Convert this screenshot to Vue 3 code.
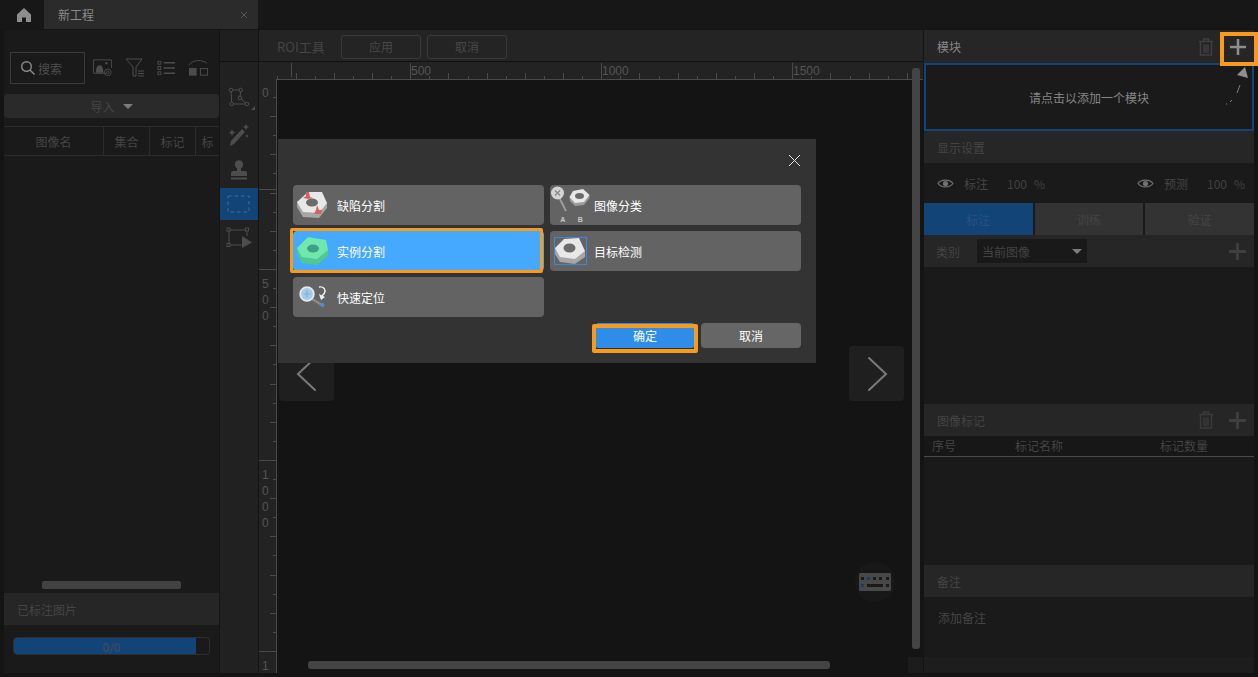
<template>
  <div class="app">
    <div class="tabbar">
      <div class="home">
        <svg width="16" height="16" viewBox="0 0 16 16"><path d="M8 1 L15 7.5 V15 H10 V10.5 H6 V15 H1 V7.5 Z" fill="#8e8e8e" /></svg>
      </div>
      <div class="tab">
        <span>新工程</span>
        <svg width="8" height="8" viewBox="0 0 8 8"><path d="M1 1 L7 7 M7 1 L1 7" stroke="#555" stroke-width="1" /></svg>
      </div>
    </div>

    <div class="main">
      <!-- 左侧图像列表 -->
      <aside class="left">
        <div class="search-row">
          <div class="search">
            <svg width="16" height="16" viewBox="0 0 16 16" fill="none" stroke="#8a8a8a" stroke-width="1.4"><circle cx="6.5" cy="6.5" r="4.8" /><path d="M10 10 L14.5 14.5" /></svg>
            <span>搜索</span>
          </div>
          <svg class="ic" width="21" height="20" viewBox="0 0 22 20" fill="none" stroke="#4c4c4c">
            <path d="M15 15.5 H1.5 V1.5 H20.5 V10" />
            <path d="M4 15 C4.5 10 5 7 8 7 C11 7 11.5 10 12 15 Z" fill="#4c4c4c" stroke="none" />
            <circle cx="15" cy="5" r="1.3" fill="#4c4c4c" stroke="none" />
            <circle cx="16.5" cy="14.5" r="3.5" /><circle cx="16.5" cy="14.5" r="1.3" />
          </svg>
          <svg class="ic" width="20" height="20" viewBox="0 0 20 20" fill="none" stroke="#4c4c4c">
            <path d="M1 1 H17 L11 9 V18 L8 18 V9 Z" /><path d="M13 13 H19 M13 15.5 H19 M13 18 H19" />
          </svg>
          <svg class="ic" width="19" height="16" viewBox="0 0 20 16" fill="none" stroke="#4c4c4c">
            <rect x="1" y="1" width="3" height="3" /><rect x="1" y="6.5" width="3" height="3" /><rect x="1" y="12" width="3" height="3" />
            <path d="M7 2.5 H19 M7 8 H19 M7 13.5 H19" stroke-width="1.6" />
          </svg>
          <svg class="ic" width="21" height="18" viewBox="0 0 22 18" fill="none" stroke="#4c4c4c">
            <path d="M1 6 C5 0 15 0 20 4" /><rect x="1" y="9" width="8" height="8" fill="#4c4c4c" stroke="none" /><rect x="13" y="9.5" width="7.5" height="7" />
          </svg>
        </div>
        <div class="import">导入<i class="caret"></i></div>
        <div class="thead">
          <div v-for="c in imageCols" :key="c.name + c.w" class="th" :style="{ width: c.w + 'px' }">{{ c.name }}</div>
        </div>
        <div class="tbody"></div>
        <div class="left-scroll"></div>
        <div class="sec-head">已标注图片</div>
        <div class="progress-wrap">
          <div class="progress">
            <div class="progress-fill"></div>
            <span>0/0</span>
          </div>
        </div>
      </aside>

      <!-- 工具条 -->
      <div class="tools">
        <div class="tools-top"></div>
        <div class="tool tool-poly">
          <svg width="32" height="26" viewBox="0 0 32 26" fill="none" stroke="#4d4d4d">
            <path d="M8 6 H17.7 L17 14 L24 20 H8.7 Z" />
            <circle cx="8" cy="6" r="1.8" fill="#212121" /><circle cx="17.7" cy="6" r="1.8" fill="#212121" /><circle cx="17" cy="14" r="1.8" fill="#212121" /><circle cx="24" cy="20" r="1.8" fill="#212121" /><circle cx="8.7" cy="20" r="1.8" fill="#212121" />
            <path d="M32 22 V26 H28 Z" fill="#4d4d4d" stroke="none" />
          </svg>
        </div>
        <div class="tool tool-wand">
          <svg width="22" height="24" viewBox="0 0 22 24" fill="none">
            <path d="M2 23 L3 18 L14 6 L17 9 L6 21 Z" fill="#4d4d4d" />
            <path d="M4 6 L5 8.5 L7.5 9.5 L5 10.5 L4 13 L3 10.5 L0.5 9.5 L3 8.5 Z M18 1 L19 3 L21 4 L19 5 L18 7 L17 5 L15 4 L17 3 Z M19 11 L19.7 12.5 L21 13 L19.7 13.5 L19 15 L18.3 13.5 L17 13 L18.3 12.5 Z" fill="#4d4d4d" />
          </svg>
        </div>
        <div class="tool tool-stamp">
          <svg width="18" height="20" viewBox="0 0 18 20" fill="#4d4d4d">
            <circle cx="9" cy="4.5" r="4.2" /><rect x="7" y="7" width="4" height="4" /><path d="M1 16 V13 Q1 11 3 11 H15 Q17 11 17 13 V16 Z" /><rect x="1" y="17.5" width="16" height="2" />
          </svg>
        </div>
        <div class="tool tool-active">
          <svg width="24" height="18" viewBox="0 0 24 18" fill="none" stroke="#3f6b9c" stroke-dasharray="3.5 3"><rect x="1" y="1" width="21" height="16" /></svg>
        </div>
        <div class="tool">
          <svg width="26" height="22" viewBox="0 0 26 22" fill="none" stroke="#4d4d4d">
            <path d="M3 3 H21 M3 3 V18 M3 18 H16 M21 3 V9" />
            <rect x="1" y="1" width="3" height="3" fill="#212121" /><rect x="19.5" y="1" width="3" height="3" fill="#212121" /><rect x="1" y="16.5" width="3" height="3" fill="#212121" />
            <path d="M16 9 L26 15.5 L16 21 Z" fill="#4d4d4d" stroke="none" />
          </svg>
        </div>
      </div>

      <!-- 画布区 -->
      <section class="center">
        <div class="roi-bar">
          <span class="roi-title">ROI工具</span>
          <div class="roi-btn">应用</div>
          <div class="roi-btn">取消</div>
        </div>
        <svg class="ruler-top" width="664" height="18">
          <line v-for="t in topTicks" :key="t.x" :x1="t.x" :x2="t.x" :y1="t.y" y2="17" stroke="#4a4a4a" />
          <line x1="32.5" x2="32.5" y1="1" y2="15" stroke="#4a4a4a" />
          <line x1="17" x2="664" y1="17.5" y2="17.5" stroke="#4a4a4a" />
          <text v-for="l in topLabels" :key="l.t" :x="l.x" y="13" class="ruler-text">{{ l.t }}</text>
        </svg>
        <div class="canvas-row">
          <svg class="ruler-left" width="18" height="593">
            <line v-for="t in leftTicks" :key="t.y" :x1="t.x" x2="17" :y1="t.y" :y2="t.y" stroke="#4a4a4a" />
            <line x1="17.5" x2="17.5" y1="0" y2="593" stroke="#4a4a4a" />
            <text v-for="l in leftLabels" :key="l.y" x="3" :y="l.y" class="ruler-text">{{ l.t }}</text>
          </svg>
          <div class="canvas">
            <div class="nav nav-left">
              <svg width="22" height="36" viewBox="0 0 22 36" fill="none" stroke="#7a7a7a" stroke-width="2" stroke-linecap="round"><path d="M19 2 L2 18 L19 34" /></svg>
            </div>
            <div class="nav nav-right">
              <svg width="22" height="36" viewBox="0 0 22 36" fill="none" stroke="#7a7a7a" stroke-width="2" stroke-linecap="round"><path d="M3 2 L20 18 L3 34" /></svg>
            </div>
            <div class="keyboard">
              <svg width="32" height="18" viewBox="0 0 32 18">
                <rect width="32" height="18" rx="1.5" fill="#484848" />
                <g fill="#1a1a1a">
                  <rect x="2" y="4" width="3" height="3" /><rect x="8" y="4" width="3" height="3" fill="#173f6b" /><rect x="14" y="4" width="3" height="3" /><rect x="20" y="4" width="3" height="3" /><rect x="27" y="4" width="3" height="3" />
                  <rect x="2" y="11" width="3" height="3" fill="#173f6b" /><rect x="8" y="11" width="16" height="3" /><rect x="27" y="11" width="3" height="3" />
                </g>
              </svg>
            </div>
            <div class="vscroll"></div>
            <div class="hscroll"></div>
            <div class="corner"></div>
          </div>
        </div>
      </section>

      <!-- 右侧面板 -->
      <aside class="right">
        <div class="head head-module">
          <span class="title-bright">模块</span>
          <div class="head-icons">
            <svg class="module-trash" width="16" height="18" viewBox="0 0 16 18" fill="none" stroke="#3f3f3f" stroke-width="1.4"><path d="M1 3.5 H15 M5.5 3 V1 H10.5 V3 M2.5 4 V17 H13.5 V4 M6 6.5 V15 M8 6.5 V15 M10 6.5 V15" /></svg>
            <div class="plus-box">
              <svg width="16" height="16" viewBox="0 0 16 16"><path d="M8 0 V16 M0 8 H16" stroke="#8d8d8d" stroke-width="2.6" /></svg>
            </div>
          </div>
        </div>
        <div class="module-box">
          <span>请点击以添加一个模块</span>
          <svg class="hint-arrow" width="30" height="44" viewBox="0 0 30 44" fill="none">
            <path d="M2 39 L3 39 M6 37 L8 35 M13 28 L16 20" stroke="#7e7e7e" stroke-width="1" />
            <path d="M21 2 L24 13 L13 10 Z" fill="#8f8f8f" />
          </svg>
        </div>
        <div class="head"><span>显示设置</span></div>
        <div class="display-row">
          <div v-for="d in displayItems" :key="d" class="display-item">
            <svg width="17" height="11" viewBox="0 0 17 11" fill="none" stroke="#707070" stroke-width="1.2"><path d="M1 5.5 C4 1 13 1 16 5.5 C13 10 4 10 1 5.5 Z" /><circle cx="8.5" cy="5.5" r="2.6" fill="#707070" stroke="none" /></svg>
            <span class="d-label">{{ d }}</span>
            <span class="d-value"><span>100</span><span>%</span></span>
          </div>
        </div>
        <div class="mode-tabs">
          <div v-for="(m, i) in modes" :key="m" class="mode" :class="{ on: i === 0 }">{{ m }}</div>
        </div>
        <div class="head cat-row">
          <span class="cat-label">类别</span>
          <div class="cat-select"><span>当前图像</span><i class="caret"></i></div>
          <svg class="cat-plus" width="17" height="17" viewBox="0 0 17 17"><path d="M8.5 0 V17 M0 8.5 H17" stroke="#3f3f3f" stroke-width="2.8" /></svg>
        </div>
        <div class="cat-body"></div>
        <div class="head">
          <span>图像标记</span>
          <div class="head-icons marks-icons">
            <svg width="16" height="18" viewBox="0 0 16 18" fill="none" stroke="#3a3a3a" stroke-width="1.4"><path d="M1 3.5 H15 M5.5 3 V1 H10.5 V3 M2.5 4 V17 H13.5 V4 M6 6.5 V15 M8 6.5 V15 M10 6.5 V15" /></svg>
            <svg width="17" height="17" viewBox="0 0 17 17"><path d="M8.5 0 V17 M0 8.5 H17" stroke="#3f3f3f" stroke-width="2.8" /></svg>
          </div>
        </div>
        <div class="marks-head">
          <span class="m1">序号</span><span class="m2">标记名称</span><span class="m3">标记数量</span>
        </div>
        <div class="marks-body"></div>
        <div class="head"><span>备注</span></div>
        <div class="note">添加备注</div>
        <div class="note-foot"></div>
      </aside>
    </div>

    <!-- 选择模块对话框 -->
    <div class="dialog">
      <div class="dialog-top">
        <svg width="13" height="13" viewBox="0 0 13 13"><path d="M1 1 L12 12 M12 1 L1 12" stroke="#e2e2e2" stroke-width="1" /></svg>
      </div>
      <div class="choices">
        <div class="choice">
          <svg width="40" height="40" viewBox="0 0 40 40">
            <path d="M1 17 L1 22 L7 32 L23 33 L31 23 L31 18 Z" fill="#a6a6a6" />
            <path d="M12 7 L26 7 L31 18 L23 28 L7 27 L1 17 Z" fill="#e8e8e8" />
            <ellipse cx="16" cy="17.5" rx="6" ry="4" fill="#6b6b6b" />
            <path d="M10 7 L13 7 L14 12 L17 13 L12 14 L7 13 L10 11 Z M21 20 L23 25 L26 25 L25 29 L18 29 L20 25 Z" fill="#dc5e60" />
          </svg>
          <span>缺陷分割</span>
        </div>
        <div class="choice">
          <svg width="44" height="40" viewBox="0 0 44 40">
            <path d="M9 12 L16 26" stroke="#9c9c9c" stroke-width="2" />
            <circle cx="7.5" cy="8" r="6.5" fill="#d4d4d4" />
            <path d="M5 5.5 L10 10.5 M10 5.5 L5 10.5" stroke="#8a8a8a" stroke-width="1.4" />
            <path d="M19.5 12 L20 16 L25 21 L34 20 L39.5 13 L39.5 10 Z" fill="#9c9c9c" />
            <path d="M23 6 L33 4 L39.5 10 L34 17 L25 18 L19.5 12 Z" fill="#e8e8e8" />
            <ellipse cx="29.5" cy="11" rx="4.5" ry="3" fill="#6b6b6b" />
            <text x="12.7" y="37" text-anchor="middle" class="ab">A</text>
            <text x="30.3" y="37" text-anchor="middle" class="ab">B</text>
          </svg>
          <span>图像分类</span>
        </div>
        <div class="choice selected">
          <svg width="40" height="40" viewBox="0 0 40 40">
            <path d="M1 17 L1 23 L6 32 L21 34 L32 25 L32 19 Z" fill="#50c893" />
            <path d="M12 6 L30 9 L32 19 L21 28 L6 26 L1 17 Z" fill="#6ee8ab" />
            <ellipse cx="17" cy="17.5" rx="6" ry="4" fill="#3fa08a" />
          </svg>
          <span>实例分割</span>
        </div>
        <div class="choice">
          <svg width="44" height="40" viewBox="0 0 44 40">
            <rect x="4.5" y="6.5" width="32" height="27" fill="none" stroke="#3f86d8" stroke-width="1" />
            <path d="M5 17 L5 23 L10 31 L25 33 L35 26 L35 20 Z" fill="#a6a6a6" />
            <path d="M14 8 L29 7 L35 20 L25 28 L10 26 L5 17 Z" fill="#e8e8e8" />
            <ellipse cx="19.5" cy="17" rx="6" ry="4.5" fill="#6b6b6b" />
          </svg>
          <span>目标检测</span>
        </div>
        <div class="choice">
          <svg width="40" height="40" viewBox="0 0 40 40" fill="none">
            <path d="M16 22 L26 28" stroke="#8a8a8a" stroke-width="2.6" />
            <circle cx="26.5" cy="28" r="2" fill="#4a8fd0" />
            <circle cx="11" cy="17" r="6.8" fill="#a4cbea" stroke="#e8e8e8" stroke-width="1.8" />
            <path d="M11 13.5 V20.5 M7.5 17 H14.5" stroke="#7fb0d8" stroke-width="1.2" />
            <path d="M23 10 C28 9 30 13 28.5 16 L26 19" stroke="#f0f0f0" stroke-width="1.4" />
            <path d="M23 17 L25 23 L29 20 Z" fill="#f0f0f0" />
          </svg>
          <span>快速定位</span>
        </div>
      </div>
      <div class="dialog-foot">
        <button class="d-btn confirm">确定</button>
        <button class="d-btn">取消</button>
      </div>
    </div>
  </div>
</template>

<script setup>
const imageCols = [
  { name: '图像名', w: 100 },
  { name: '集合', w: 46 },
  { name: '标记', w: 46 },
  { name: '标', w: 23 },
]
const displayItems = ['标注', '预测']
const modes = ['标注', '训练', '验证']

const STEP = 19.1

// 顶部标尺：原点偏移 259
const topTicks = []
for (let i = 0; i < 34; i++) {
  const x = 276.5 + i * STEP
  if (x > 923) break
  const major = (i - 7) % 10 === 0
  topTicks.push({ x: Math.round(x - 259) + 0.5, y: major ? 1 : i % 2 === 0 ? 14 : 11 })
}
const topLabels = [
  { t: '500', x: 152 },
  { t: '1000', x: 343 },
  { t: '1500', x: 534 },
]

// 左侧标尺：原点偏移 80
const leftTicks = []
for (let i = 0; i < 30; i++) {
  const y = 97 + i * STEP
  if (y > 672) break
  const major = (i - 9) % 10 === 0
  leftTicks.push({ y: Math.round(y - 80) + 0.5, x: major ? 0 : i % 2 === 0 ? 14 : 11 })
}
leftTicks.push({ y: 109.5, x: 0 })
const leftLabels = [
  { t: '0', y: 17 },
  { t: '5', y: 208 },
  { t: '0', y: 224 },
  { t: '0', y: 240 },
  { t: '1', y: 399 },
  { t: '0', y: 415 },
  { t: '0', y: 431 },
  { t: '0', y: 447 },
  { t: '1', y: 590 },
]
</script>

<style>
html, body {
  margin: 0;
  background: #141414;
}
</style>

<style scoped>
.app {
  position: relative;
  width: 1258px;
  height: 677px;
  overflow: hidden;
  background: #141414;
  color: #4a4a4a;
  font-family: "Noto Sans CJK SC", "Liberation Sans", sans-serif;
  font-size: 12px;
}
.tabbar {
  display: flex;
  height: 29px;
  padding-left: 16px;
  background: #171717;
}
.home {
  display: flex;
  align-items: center;
  width: 28px;
}
.tab {
  display: flex;
  align-items: center;
  justify-content: space-between;
  width: 214px;
  box-sizing: border-box;
  padding: 0 10px 0 14px;
  background: #2b2b2b;
  color: #8a8a8a;
}
.main {
  display: flex;
  gap: 1px;
  height: 644px;
  padding: 1px 4px 0;
  box-sizing: border-box;
}

/* left */
.left {
  display: flex;
  flex-direction: column;
  width: 215px;
  background: #1a1a1a;
}
.search-row {
  display: flex;
  align-items: center;
  gap: 12px;
  padding: 22px 0 0 6px;
}
.search {
  display: flex;
  align-items: center;
  gap: 2px;
  width: 75px;
  height: 32px;
  box-sizing: border-box;
  padding-left: 9px;
  margin-right: -5px;
  border: 1px solid #3a3a3a;
  color: #4d4d4d;
}
.ic {
  flex: none;
}
.import {
  display: flex;
  align-items: center;
  justify-content: center;
  gap: 8px;
  height: 24px;
  margin-top: 10px;
  background: #2a2a2a;
  border-radius: 4px;
  color: #454545;
}
.caret {
  display: inline-block;
  width: 0;
  height: 0;
  border-left: 5px solid transparent;
  border-right: 5px solid transparent;
  border-top: 5px solid #7c7c7c;
}
.thead {
  display: flex;
  height: 30px;
  margin-top: 8px;
  border-top: 1px solid #2c2c2c;
  border-bottom: 1px solid #2c2c2c;
  box-sizing: border-box;
  overflow: hidden;
}
.th {
  display: flex;
  align-items: center;
  justify-content: center;
  flex: none;
  box-sizing: border-box;
  border-right: 1px solid #2c2c2c;
  color: #454545;
}
.th:last-child {
  border-right: none;
}
.tbody {
  flex: 1;
}
.left-scroll {
  width: 139px;
  height: 8px;
  margin: 0 0 4px 38px;
  background: #424242;
  border-radius: 2px;
}
.sec-head {
  display: flex;
  align-items: center;
  height: 32px;
  padding-left: 13px;
  background: #262626;
  color: #444;
}
.progress-wrap {
  height: 48px;
  padding: 12px 9px 0;
  box-sizing: border-box;
}
.progress {
  position: relative;
  display: flex;
  align-items: center;
  justify-content: center;
  height: 18px;
  border: 1px solid #2e2e2e;
  border-radius: 4px;
  box-sizing: border-box;
  overflow: hidden;
  color: #3f4f60;
}
.progress-fill {
  position: absolute;
  top: 0;
  bottom: 0;
  left: 0;
  width: 182px;
  background: #134478;
}
.progress span {
  position: relative;
}

/* tools */
.tools {
  display: flex;
  flex-direction: column;
  width: 38px;
  background: #212121;
}
.tools-top {
  height: 31px;
  margin-bottom: 19px;
  background: #1f1f1f;
  border-bottom: 1px solid #111;
}
.tool {
  display: flex;
  align-items: center;
  justify-content: center;
  height: 32px;
}
.tool-poly {
  margin-bottom: 6px;
}
.tool-wand {
  margin-bottom: 3px;
}
.tool-stamp {
  margin-bottom: 2px;
}
.tool-active {
  margin-bottom: 2px;
  background: #134478;
}

/* center */
.center {
  display: flex;
  flex-direction: column;
  width: 664px;
  background: #232323;
}
.roi-bar {
  display: flex;
  align-items: center;
  gap: 6px;
  height: 32px;
  box-sizing: border-box;
  flex: none;
  padding: 2px 0 0 18px;
  border-bottom: 1px solid #111;
  background: #242424;
}
.roi-title {
  width: 58px;
  color: #454545;
  font-size: 13px;
}
.roi-btn {
  display: flex;
  align-items: center;
  justify-content: center;
  width: 80px;
  height: 24px;
  border: 1px solid #3a3a3a;
  border-radius: 3px;
  box-sizing: border-box;
  color: #484848;
}
.ruler-top {
  display: block;
  flex: none;
}
.ruler-text {
  font-family: "Liberation Sans", sans-serif;
  font-size: 12px;
  fill: #545454;
}
.canvas-row {
  display: flex;
  flex: 1;
  min-height: 0;
}
.ruler-left {
  display: block;
  flex: none;
}
.canvas {
  position: relative;
  flex: 1;
  background: #141414;
}
.nav {
  position: absolute;
  top: 266px;
  display: flex;
  align-items: center;
  justify-content: center;
  width: 55px;
  height: 55px;
  background: #1f1f1f;
  border-radius: 4px;
}
.nav-left {
  left: 2px;
}
.nav-right {
  left: 572px;
}
.keyboard {
  position: absolute;
  left: 578px;
  top: 482px;
  display: flex;
  align-items: center;
  justify-content: center;
  width: 40px;
  height: 40px;
  background: #181818;
  border-radius: 50%;
}
.vscroll {
  position: absolute;
  left: 635px;
  top: -12px;
  width: 8px;
  height: 581px;
  background: #444;
  border-radius: 3px;
}
.hscroll {
  position: absolute;
  left: 31px;
  top: 581px;
  width: 522px;
  height: 8px;
  background: #444;
  border-radius: 3px;
}
.corner {
  position: absolute;
  right: 0;
  bottom: 0;
  width: 15px;
  height: 16px;
  background: #1c1c1c;
}

/* right */
.right {
  display: flex;
  flex-direction: column;
  width: 330px;
  background: #1a1a1a;
}
.head {
  position: relative;
  display: flex;
  align-items: center;
  justify-content: space-between;
  flex: none;
  height: 32px;
  padding-left: 13px;
  background: #262626;
  color: #444;
}
.head-module {
  height: 33px;
}
.title-bright {
  color: #868686;
}
.head-icons {
  display: flex;
  align-items: center;
}
.module-trash {
  margin-right: 40px;
}
.plus-box {
  position: absolute;
  left: 296px;
  top: 2px;
  display: flex;
  align-items: center;
  justify-content: center;
  width: 38px;
  height: 34px;
  box-sizing: border-box;
  padding: 0 2px 4px 0;
  border: 4px solid #f89a1c;
  z-index: 2;
}
.marks-icons {
  gap: 15px;
  padding-right: 8px;
}
.module-box {
  position: relative;
  display: flex;
  align-items: center;
  justify-content: center;
  flex: none;
  height: 68px;
  box-sizing: border-box;
  border: 2px solid #134478;
  color: #858585;
}
.hint-arrow {
  position: absolute;
  left: 298px;
  top: 0;
}
.display-row {
  display: flex;
  justify-content: space-between;
  align-items: center;
  flex: none;
  height: 40px;
  padding: 0 9px 0 13px;
}
.display-item {
  display: flex;
  align-items: center;
  gap: 10px;
}
.d-label {
  color: #454545;
}
.d-value {
  display: flex;
  justify-content: space-between;
  width: 38px;
  margin-left: 9px;
  color: #414141;
}
.mode-tabs {
  display: flex;
  gap: 2px;
  flex: none;
  height: 32px;
}
.mode {
  display: flex;
  align-items: center;
  justify-content: center;
  flex: 1;
  background: #333;
  color: #444;
}
.mode.on {
  background: #134478;
  color: #2a5080;
}
.cat-row {
  justify-content: flex-start;
  padding-left: 12px;
}
.cat-label {
  width: 41px;
}
.cat-select {
  display: flex;
  align-items: center;
  justify-content: space-between;
  width: 110px;
  height: 24px;
  box-sizing: border-box;
  padding: 0 5px;
  background: #191919;
}
.cat-plus {
  margin-left: auto;
  margin-right: 8px;
}
.cat-body {
  flex: none;
  height: 137px;
}
.marks-head {
  position: relative;
  flex: none;
  height: 21px;
  border-bottom: 1px solid #4a4a4a;
  box-sizing: border-box;
  background: #171717;
  color: #444;
  line-height: 20px;
}
.marks-head span {
  position: absolute;
}
.m1 { left: 8px; }
.m2 { left: 91px; }
.m3 { left: 236px; }
.marks-body {
  flex: none;
  height: 108px;
}
.note {
  flex: 1;
  padding: 12px 14px;
  color: #444;
}
.note-foot {
  flex: none;
  height: 16px;
  background: #1d1d1d;
}

/* dialog */
.dialog {
  position: absolute;
  left: 278px;
  top: 139px;
  width: 538px;
  height: 224px;
  background: #333;
  color: #fff;
}
.dialog-top {
  display: flex;
  justify-content: flex-end;
  align-items: flex-start;
  height: 46px;
  box-sizing: border-box;
  padding: 15px 15px 0 0;
}
.choices {
  display: grid;
  grid-template-columns: 251px 251px;
  grid-auto-rows: 40px;
  gap: 6px;
  padding-left: 15px;
}
.choice {
  position: relative;
  display: flex;
  align-items: center;
  padding-left: 3px;
  background: #636363;
  border-radius: 4px;
}
.choice > svg {
  flex: none;
}
.choice > span {
  margin-left: 1px;
}
.choice:nth-child(even) {
  padding-left: 0;
}
.choice:nth-child(even) > span {
  margin-left: 0;
}
.selected {
  background: #45a9ff;
}
.selected::after {
  content: "";
  position: absolute;
  top: -3px;
  right: 1px;
  bottom: -2px;
  left: -3px;
  border: 3px solid #f89a1c;
  border-radius: 2px;
}
.ab {
  font-family: "Liberation Sans", sans-serif;
  font-size: 7px;
  font-weight: bold;
  fill: #c8c8c8;
}
.dialog-foot {
  display: flex;
  justify-content: flex-end;
  gap: 6px;
  margin-top: 6px;
  padding-right: 15px;
}
.d-btn {
  position: relative;
  width: 100px;
  height: 25px;
  padding: 0;
  border: none;
  border-radius: 4px;
  background: #666;
  color: #fff;
  font: inherit;
}
.confirm {
  background: #2e8de8;
}
.confirm::after {
  content: "";
  position: absolute;
  top: 1px;
  right: -3px;
  bottom: -5px;
  left: -3px;
  border: 4px solid #f89a1c;
  border-radius: 2px;
}
</style>
